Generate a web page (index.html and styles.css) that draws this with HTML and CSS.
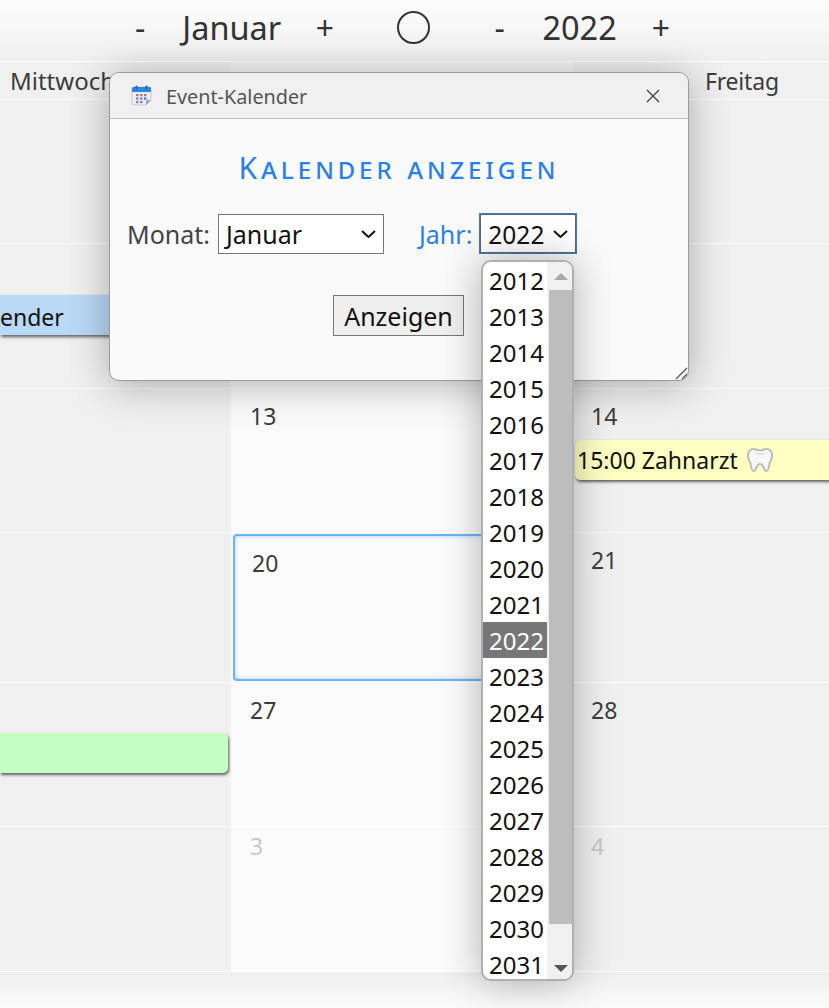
FILE: index.html
```html
<!DOCTYPE html>
<html lang="de">
<head>
<meta charset="utf-8">
<title>Event-Kalender</title>
<link rel="stylesheet" href="styles.css">
</head>
<body>
<header class="topbar">
  <div class="nav nav-month"><span class="nav-btn">-</span><span class="nav-label">Januar</span><span class="nav-btn">+</span></div>
  <span class="today-ring"></span>
  <div class="nav nav-year"><span class="nav-btn">-</span><span class="nav-label">2022</span><span class="nav-btn">+</span></div>
</header>
<main class="calendar">
  <div class="head-row">
    <div class="cell col-a head-text head-wed">Mittwoch</div>
    <div class="cell col-b"></div>
    <div class="cell col-c head-text head-fri">Freitag</div>
  </div>
  <div class="row row-1"><div class="cell col-a"></div><div class="cell col-b"></div><div class="cell col-c"></div></div>
  <div class="row row-2"><div class="cell col-a"><div class="event event-blue">ender</div></div><div class="cell col-b"></div><div class="cell col-c"></div></div>
  <div class="row row-3"><div class="cell col-a"></div><div class="cell col-b"><span class="day">13</span></div><div class="cell col-c"><span class="day">14</span><div class="event event-yellow">15:00 Zahnarzt
    <svg class="tooth" viewBox="0 0 28 28" width="28" height="28"><path d="M8 3c2.400 0 3.800 1.500 6 1.500S17.600 3 20 3c3.800 0 6 3 6 6.800 0 3.200-1.500 5-2.300 7.500-.8 2.600-1 7.700-3.400 7.700-2.800 0-1.900-7-6.300-7s-3.500 7-6.300 7c-2.400 0-2.600-5.100-3.400-7.700C3.500 14.800 2 13 2 9.800 2 6 4.200 3 8 3z" fill="#f7f7f7" stroke="#bdbdbd" stroke-width="2"/><path d="M10 7c2 1.500 6 1.500 8 0" fill="none" stroke="#dedede" stroke-width="1.500"/></svg></div></div></div>
  <div class="row row-4"><div class="cell col-a"></div><div class="cell col-b today"><span class="day">20</span></div><div class="cell col-c"><span class="day">21</span></div></div>
  <div class="row row-5"><div class="cell col-a"><div class="event event-green"></div></div><div class="cell col-b"><span class="day">27</span></div><div class="cell col-c"><span class="day">28</span></div></div>
  <div class="row row-6"><div class="cell col-a"></div><div class="cell col-b"><span class="day muted">3</span></div><div class="cell col-c"><span class="day muted">4</span></div></div>
</main>
<footer class="bottombar"></footer>

<section class="dialog">
  <div class="dialog-title">
    <svg class="cal-icon" viewBox="0 0 21 21" width="21" height="21"><path d="M2.500 2h16A1.500 1.500 0 0 1 20 3.500V15l-5 5H2.500A1.500 1.500 0 0 1 1 18.500v-15A1.500 1.500 0 0 1 2.500 2z" fill="#efeaf4" stroke="#c3b8d2" stroke-width=".8"/><path d="M15 20v-3.500a1.500 1.500 0 0 1 1.500-1.500H20z" fill="#a79bbd"/><path d="M1 7V3.500A1.500 1.500 0 0 1 2.500 2h16A1.500 1.500 0 0 1 20 3.500V7z" fill="#2b88d8"/><rect x="4.500" y=".5" width="2" height="4" rx="1" fill="#1a6cb4"/><rect x="14.500" y=".5" width="2" height="4" rx="1" fill="#1a6cb4"/><g fill="#8d7fa8"><rect x="5" y="9" width="2.500" height="2.200"/><rect x="9" y="9" width="2.500" height="2.200"/><rect x="13" y="9" width="2.500" height="2.200"/><rect x="5" y="12.500" width="2.500" height="2.200"/><rect x="9" y="12.500" width="2.500" height="2.200"/><rect x="5" y="16" width="2.500" height="2.200"/><rect x="9" y="16" width="2.500" height="2.200"/></g><rect x="13" y="12.500" width="2.500" height="2.200" fill="#1e88d8"/></svg>
    <span class="dialog-name">Event-Kalender</span>
    <svg class="close-icon" viewBox="0 0 14 14" width="14" height="14"><path d="M1 1l12 12M13 1L1 13" stroke="#444" stroke-width="1.400" fill="none"/></svg>
  </div>
  <div class="dialog-body">
    <h1 class="dialog-heading">Kalender anzeigen</h1>
    <div class="form-row">
      <label class="form-label">Monat:</label>
      <div class="select select-month"><span>Januar</span><svg class="chev" viewBox="0 0 15 8" width="15" height="8"><path d="M1 1l6.500 6L14 1" stroke="#111" stroke-width="2" fill="none"/></svg></div>
      <label class="form-label form-label-active">Jahr:</label>
      <div class="select select-year"><span>2022</span><svg class="chev" viewBox="0 0 15 8" width="15" height="8"><path d="M1 1l6.500 6L14 1" stroke="#111" stroke-width="2" fill="none"/></svg></div>
    </div>
    <div class="form-actions"><span class="button">Anzeigen</span></div>
  </div>
  <svg class="grip" viewBox="0 0 14 14" width="14" height="14"><path d="M13 2L2 13M13 8l-5 5" stroke="#555" stroke-width="1.300" fill="none"/></svg>
</section>

<div class="dropdown">
  <ul class="options">
    <li>2012</li><li>2013</li><li>2014</li><li>2015</li><li>2016</li><li>2017</li><li>2018</li><li>2019</li><li>2020</li><li>2021</li><li class="selected">2022</li><li>2023</li><li>2024</li><li>2025</li><li>2026</li><li>2027</li><li>2028</li><li>2029</li><li>2030</li><li>2031</li>
  </ul>
  <div class="scrollbar">
    <div class="arrow-up"></div>
    <div class="thumb"></div>
    <div class="arrow-down"></div>
  </div>
</div>
</body>
</html>
```
FILE: styles.css
```css
* { box-sizing: border-box; }
html, body { margin: 0; padding: 0; }
body {
  width: 829px;
  height: 1008px;
  overflow: hidden;
  position: relative;
  background: #f7f7f7;
  font-family: "Noto Sans", "Open Sans", sans-serif;
  color: #333;
}
.topbar {
  height: 61px;
  display: flex;
  align-items: center;
  padding: 0 0 6px 135px;
  background: linear-gradient(#fdfdfd, #f0f0f0);
  font-size: 32.5px;
}
.nav { display: flex; align-items: center; }
.nav-month .nav-label { margin: 0 34.500px 0 37px; }
.nav-year { margin-left: 65px; }
.nav-year .nav-label { margin: 0 35px 0 37.500px; }
.nav-btn { font-size: 32px; }
.today-ring {
  width: 33px; height: 33px; margin-left: 62.500px;
  border: 2px solid #333; border-radius: 50%;
}
.calendar { display: flex; flex-direction: column; border-top: 1px solid #fff; }
.head-row, .row { display: flex; border-bottom: 1px solid #fff; }
.head-row { height: 38px; }
.row-1 { height: 144px; }
.row-2 { height: 145px; }
.row-3 { height: 144px; }
.row-4 { height: 150px; }
.row-5 { height: 144px; }
.row-6 { height: 145px; }
.bottombar { height: 36px; background: linear-gradient(#efefef, #fbfbfb); }
.cell { position: relative; }
.col-a { width: 231px; background: #f0f0f0; }
.col-b { width: 342px; background: #fbfbfb; padding: 12px 19px; }
.col-c { width: 256px; background: #f0f0f0; padding: 12px 18px; }
.head-row .col-b { background: #f5f5f5; }
.head-text { font-size: 24px; line-height: 38px; padding: 0; color: #3c3c3c; white-space: nowrap; }
.head-wed { padding-left: 10px; }
.head-fri { padding-left: 132px; font-size: 23px; letter-spacing: -.2px; }
.day { display: block; font-size: 23px; line-height: 30px; color: #3c3c3c; }
.muted { color: #c8c8c8; margin-top: -8px; }
.today {
  margin: 1px 0 1px 2px;
  width: 340px;
  padding: 12px 17px;
  border: 2px solid #6cb4f5;
  border-radius: 4px;
  box-shadow: inset 0 0 5px #a8d2f8;
}
.event {
  height: 40px;
  font-size: 24px;
  line-height: 41px;
  color: #111;
  white-space: nowrap;
  box-shadow: 1px 2px 3px rgba(0,0,0,.6);
}
.event-blue { margin: 51px 0 0; width: 231px; font-size: 23px; line-height: 45px; background: #b9d9f7; }
.event-green { margin-top: 50px; width: 228px; background: #c4ffc4; border-radius: 0 5px 5px 0; }
.event-yellow { margin: 9px -18px 0 -16px; padding-left: 2px; font-size: 23px; background: #ffffc4; border-radius: 5px 0 0 5px; display: flex; align-items: center; gap: 8px; }
.dialog {
  position: absolute;
  left: 109px; top: 72px;
  width: 580px; height: 309px;
  background: #fafafa;
  border: 1px solid #9a9a9a;
  border-radius: 10px;
  box-shadow: 0 4px 40px rgba(0,0,0,.3);
}
.dialog-title {
  height: 46px;
  display: flex; align-items: center;
  padding: 0 28px 0 21px;
  background: #f0f0f0;
  border-bottom: 1px solid #c0c0c0;
  border-radius: 10px 10px 0 0;
}
.dialog-name { font-size: 19.800px; color: #555; margin-left: 14px; flex: 1; padding-top: 2px; }
.dialog-heading {
  margin: 29px 0 0;
  text-align: center;
  font-family: "Noto Sans", sans-serif;
  font-size: 30px;
  line-height: 40px;
  font-weight: 400;
  font-variant: small-caps;
  letter-spacing: 3.900px;
  color: #2b80e8;
}
.form-row { display: flex; align-items: center; margin: 25px 0 0 17px; height: 41px; font-size: 25px; }
.form-label { color: #444; padding-top: 1px; }
.form-label-active { color: #2b80e8; margin-left: 35px; }
.select {
  display: flex; align-items: center; justify-content: space-between;
  background: #fff; border: 1px solid #767676;
  height: 40px; color: #111; padding: 1px 7px 0 7px;
}
.chev { margin-top: -1px; }
.select-month { width: 166px; margin-left: 8px; }
.select-year { width: 98px; height: 41px; margin-left: 7px; border: 1px solid #3a7fc4; box-shadow: inset 0 0 0 1px #666; padding: 1px 8px 0 8px; font-size: 24.500px; }
.form-actions { display: flex; justify-content: center; margin: 41px 0 0 -1px; }
.button { display: block; height: 41px; line-height: 41px; padding: 0 10.500px; border: 1px solid #767676; background: #efefef; color: #111; font-size: 25px; }
.grip { position: absolute; right: 0; bottom: 0; }
.dropdown {
  position: absolute;
  left: 481px; top: 260px;
  width: 93px; height: 721px;
  display: flex;
  background: #fff;
  border: 2px solid #b0b0b0;
  border-radius: 10px;
  overflow: hidden;
  box-shadow: 0 0 40px rgba(0,0,0,.3);
}
.options { list-style: none; margin: 0; padding: 0; width: 64px; flex: none; font-size: 24px; color: #111; height: 720px; overflow: hidden; }
.options li { height: 36px; line-height: 38px; padding-left: 6px; }
.options .selected { background: #777; color: #fff; }
.scrollbar { flex: 1; display: flex; flex-direction: column; background: #f0f0f0; position: relative; }
.arrow-up { height: 28px; position: relative; }
.arrow-up::after { content: ""; position: absolute; left: 7px; top: 11px; border: 7px solid transparent; border-top: 0; border-bottom-color: #a8a8a8; }
.thumb { height: 634px; background: #bdbdbd; margin-left: 2px; }
.arrow-down { flex: 1; position: relative; }
.arrow-down::after { content: ""; position: absolute; left: 7px; bottom: 7px; border: 7px solid transparent; border-bottom: 0; border-top-color: #555; }
```
